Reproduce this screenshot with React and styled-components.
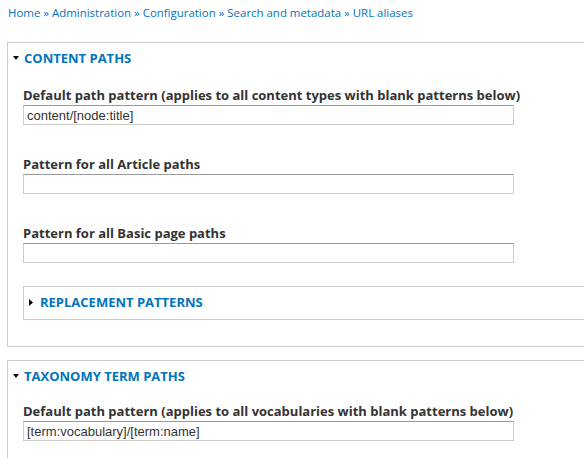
import React from "react";
import styled, { createGlobalStyle } from "styled-components";

const GlobalStyle = createGlobalStyle`
  html, body {
    margin: 0;
    padding: 0;
    background: #fff;
  }
  body {
    font-family: "Open Sans", "Liberation Sans", sans-serif;
    color: #333;
  }
`;

const Page = styled.div`
  width: 584px;
  height: 458px;
  overflow: hidden;
`;

const Breadcrumb = styled.div`
  padding: 5px 8px 0;
  font-size: 11.45px;
  line-height: 16px;
  color: #0074bd;
  white-space: nowrap;
`;

const Crumb = styled.a`
  color: #0074bd;
  text-decoration: none;
`;

const Sep = styled.span`
  margin: 0 3px;
`;

const Content = styled.div`
  padding: 21px 0 0 7px;
`;

const Fieldset = styled.div`
  border: 1px solid #ccc;
  width: 620px;
  padding: 0 0 26px 15px;
  margin-bottom: 13px;
`;

const Inner = styled.div`
  border: 1px solid #ccc;
  width: 561px;
  padding: 7px 0 9px 5px;
  margin-top: 23px;
`;

const Legend = styled.div`
  display: flex;
  align-items: center;
  gap: 5px;
  padding-top: 7px;
  margin-left: -10px;
  font-size: 13px;
  line-height: 16px;
  font-weight: 700;
  text-transform: uppercase;
  color: #0074bd;
`;

const InnerLegend = styled(Legend)`
  padding-top: 0;
  margin-left: 0;
  gap: 7px;
`;

const Arrow = styled.svg`
  flex: none;
  display: block;
`;

const Item = styled.div`
  margin-top: ${(p) => p.$top}px;
`;

const Label = styled.label`
  display: block;
  font-size: 13px;
  line-height: 16px;
  font-weight: 700;
  color: #333;
  margin-bottom: 2px;
  white-space: nowrap;
`;

const Input = styled.input`
  display: block;
  box-sizing: border-box;
  width: 491px;
  height: 20px;
  margin: 0;
  padding: 0 3px;
  border: 1px solid #ccc;
  border-top-color: #999;
  background: #fff;
  font-family: "Liberation Sans", Arial, sans-serif;
  font-size: 13px;
  color: #333;
  outline: none;
`;

const Down = () => (
  <Arrow width="6" height="4" viewBox="0 0 6 4">
    <path d="M0 0 H6 L3 4 Z" fill="#000" />
  </Arrow>
);

const Right = () => (
  <Arrow width="4" height="7" viewBox="0 0 4 7">
    <path d="M0 0 L4 3.5 L0 7 Z" fill="#000" />
  </Arrow>
);

const crumbs = ["Home", "Administration", "Configuration", "Search and metadata", "URL aliases"];

export default function App() {
  return (
    <Page>
      <GlobalStyle />
      <Breadcrumb>
        {crumbs.map((c, i) => (
          <React.Fragment key={c}>
            {i > 0 && <Sep>»</Sep>}
            <Crumb href="#">{c}</Crumb>
          </React.Fragment>
        ))}
      </Breadcrumb>
      <Content>
        <Fieldset>
          <Legend>
            <Down />
            Content paths
          </Legend>
          <Item $top={21}>
            <Label>Default path pattern (applies to all content types with blank patterns below)</Label>
            <Input defaultValue="content/[node:title]" />
          </Item>
          <Item $top={31}>
            <Label>Pattern for all Article paths</Label>
            <Input defaultValue="" />
          </Item>
          <Item $top={31}>
            <Label>Pattern for all Basic page paths</Label>
            <Input defaultValue="" />
          </Item>
          <Inner>
            <InnerLegend>
              <Right />
              Replacement patterns
            </InnerLegend>
          </Inner>
        </Fieldset>
        <Fieldset>
          <Legend>
            <Down />
            Taxonomy term paths
          </Legend>
          <Item $top={19}>
            <Label>Default path pattern (applies to all vocabularies with blank patterns below)</Label>
            <Input defaultValue="[term:vocabulary]/[term:name]" />
          </Item>
        </Fieldset>
      </Content>
    </Page>
  );
}
